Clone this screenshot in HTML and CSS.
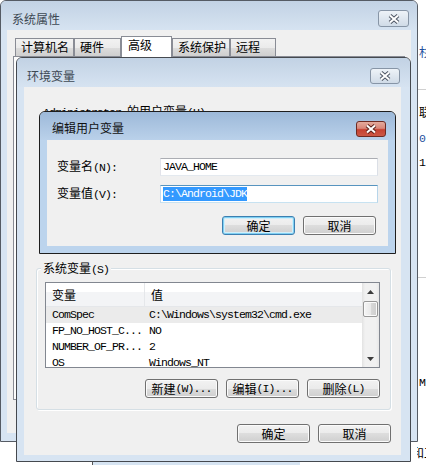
FILE: index.html
```html
<!DOCTYPE html>
<html lang="zh-CN">
<head>
<meta charset="utf-8">
<title>环境变量</title>
<link rel="stylesheet" href="styles.css">
</head>
<body>
<div class="desk">
  <div class="behind">
    <div class="frag blue f1">杉</div>
    <div class="hl h1"></div>
    <div class="frag f2">联</div>
    <div class="frag blue f3 m">0</div>
    <div class="frag f4 m">1</div>
    <div class="hl h2"></div>
    <div class="frag f5 m">M)</div>
    <div class="frag f6">和工</div>
  </div>
  <div class="strip"></div>

  <div class="win sys">
    <div class="titlebar">
      <span class="title">系统属性</span>
      <span class="close"><svg width="12" height="10" viewBox="0 0 12 10"><path d="M2 1.5L10 8.5M10 1.5L2 8.5" stroke="#4f5765" stroke-width="4"/><path d="M2 1.5L10 8.5M10 1.5L2 8.5" stroke="#fff" stroke-width="2"/></svg></span>
    </div>
    <div class="client">
      <div class="tabs">
        <div class="tab t1">计算机名</div>
        <div class="tab t2">硬件</div>
        <div class="tab sel t3">高级</div>
        <div class="tab t4">系统保护</div>
        <div class="tab t5">远程</div>
      </div>
      <div class="tabpanel"></div>
    </div>
  </div>

  <div class="win env">
    <div class="titlebar">
      <span class="title">环境变量</span>
      <span class="close"><svg width="12" height="10" viewBox="0 0 12 10"><path d="M2 1.5L10 8.5M10 1.5L2 8.5" stroke="#4f5765" stroke-width="4"/><path d="M2 1.5L10 8.5M10 1.5L2 8.5" stroke="#fff" stroke-width="2"/></svg></span>
    </div>
    <div class="client">
      <div class="ulabel"><span class="m">Administrator </span>的用户变量<span class="m">(U)</span></div>
      <div class="group">
        <div class="glabel">系统变量<span class="m">(S)</span></div>
        <div class="list">
          <div class="lmain">
            <div class="lhead"><span class="c1">变量</span><span class="c2">值</span></div>
            <div class="lrow sel"><span class="c1 m">ComSpec</span><span class="c2 m">C:\Windows\system32\cmd.exe</span></div>
            <div class="lrow"><span class="c1 m">FP_NO_HOST_C...</span><span class="c2 m">NO</span></div>
            <div class="lrow"><span class="c1 m">NUMBER_OF_PR...</span><span class="c2 m">2</span></div>
            <div class="lrow"><span class="c1 m">OS</span><span class="c2 m">Windows_NT</span></div>
          </div>
          <div class="vscroll">
            <div class="sarrow"><svg width="7" height="4" viewBox="0 0 7 4"><path d="M3.5 0L7 4H0Z" fill="#3c3c3c"/></svg></div>
            <div class="thumb"></div>
            <div class="sfill"></div>
            <div class="sarrow"><svg width="7" height="4" viewBox="0 0 7 4"><path d="M0 0H7L3.5 4Z" fill="#3c3c3c"/></svg></div>
          </div>
        </div>
        <div class="btnrow grp-btns">
          <button class="btn">新建<span class="m">(W)...</span></button>
          <button class="btn">编辑<span class="m">(I)...</span></button>
          <button class="btn">删除<span class="m">(L)</span></button>
        </div>
      </div>
      <div class="btnrow dlg-btns">
        <button class="btn">确定</button>
        <button class="btn">取消</button>
      </div>
    </div>
  </div>

  <div class="win edit">
    <div class="titlebar">
      <span class="title">编辑用户变量</span>
      <span class="close"><svg width="12" height="10" viewBox="0 0 12 10"><path d="M2 1.5L10 8.5M10 1.5L2 8.5" stroke="#5e231c" stroke-width="4"/><path d="M2 1.5L10 8.5M10 1.5L2 8.5" stroke="#fff" stroke-width="2"/></svg></span>
    </div>
    <div class="client">
      <div class="frow"><span class="flabel">变量名<span class="m">(N):</span></span><div class="input"><span class="m">JAVA_HOME</span></div></div>
      <div class="frow r2"><span class="flabel">变量值<span class="m">(V):</span></span><div class="input focus"><span class="m selt">C:\Android\JDK</span></div></div>
      <div class="btnrow edit-btns">
        <button class="btn def">确定</button>
        <button class="btn">取消</button>
      </div>
    </div>
  </div>
</div>
</body>
</html>
```

FILE: styles.css
```css
* { box-sizing: border-box; margin: 0; padding: 0; }
html, body { width: 426px; height: 465px; overflow: hidden; background: #fff; }
body {
  font-family: "Noto Sans CJK SC", "Noto Sans", sans-serif;
  font-size: 12px;
  line-height: 16px;
  color: #000;
}
.m {
  font-family: "Liberation Mono", "DejaVu Sans Mono", monospace;
  font-size: 11.5px;
  letter-spacing: -0.9px;
}
.desk { position: relative; width: 426px; height: 465px; overflow: hidden; }

/* background application peeking on the right */
.behind {
  position: absolute; left: 417px; top: 0; width: 9px; height: 465px;
  overflow: hidden; display: flex; flex-direction: column; padding-left: 2px;
}
.frag { height: 16px; line-height: 16px; white-space: nowrap; }
.blue { color: #1d4f9c; }
.hl { height: 1px; background: #d0d0d0; margin-left: -2px; }
.f1 { margin-top: 44px; }
.h1 { margin-top: 29px; }
.f2 { margin-top: 14px; }
.f3 { margin-top: 11px; }
.f4 { margin-top: 8px; }
.h2 { margin-top: 106px; }
.f5 { margin-top: 97px; }
.f6 { margin-top: 54px; margin-left: -7px; }
.strip {
  position: absolute; left: 92px; top: 462px; width: 208px; height: 3px;
  background: #d6e4f2; border-left: 1px solid #555;
}

/* windows */
.win {
  position: absolute; display: flex; flex-direction: column;
  border: 1px solid #555b64; border-radius: 6px 6px 0 0;
  background: #d7e4f2; overflow: hidden;
}
.sys { left: 0; top: 0; width: 418px; height: 442px; }
.env { left: 16px; top: 57px; width: 395px; height: 405px; border-color: #45494f; }
.edit { left: 39px; top: 111px; width: 357px; height: 143px; border-color: #1e1e1e; background: #bcd4ed; }

.titlebar {
  display: flex; align-items: flex-start; justify-content: space-between; flex: none;
  background: linear-gradient(#c2d2e4, #d6e3f1);
}
.sys .titlebar { height: 29px; padding-left: 11px; }
.env .titlebar { height: 29px; padding-left: 10px; }
.edit .titlebar { height: 28px; padding-left: 12px; background: linear-gradient(#9db9d9, #bad1ea); }
.title { line-height: 16px; color: #3d4853; }
.sys .title, .env .title { margin-top: 10px; }
.edit .title { margin-top: 8px; color: #111; }

.close {
  display: flex; align-items: center; justify-content: center;
  width: 30px; height: 16px;
  border: 1px solid #8795a6; border-radius: 3px;
  background: linear-gradient(#eef3f8, #d0dbe7);
}
.sys .close { width: 31px; height: 17px; margin: 9px 8px 0 0; }
.env .close { margin: 10px 10px 0 0; }
.edit .close {
  margin: 9px 9px 0 0; border-color: #6e2a22;
  background: linear-gradient(#e3aa9c 0, #d9877a 45%, #c64131 55%, #cc5846 100%);
}

.client { flex: 1; background: #f0f0f0; display: flex; flex-direction: column; min-height: 0; }
.sys .client { margin: 0 6px 8px 6px; padding: 6px 0 33px 6px; }
.env .client { margin: 0 9px 6px 7px; padding: 16px 10px 0 12px; }
.edit .client { margin: 0 7px 7px 7px; padding: 18px 10px 0 10px; }

/* tabs */
.tabs {
  display: flex; align-items: flex-start; height: 21px;
  margin: 0 0 -1px 2px; position: relative; z-index: 1;
}
.tab {
  height: 18px; margin-top: 2px; padding-left: 5px;
  border: 1px solid #898c95; border-bottom: 0;
  background: linear-gradient(#f2f2f2, #ebebeb 50%, #dddddd 50%, #cfcfcf);
  line-height: 16px; white-space: nowrap;
}
.tab.sel { height: 21px; margin-top: 0; background: #fff; padding-left: 6px; }
.t1 { width: 59px; }
.t2 { width: 47px; }
.t3 { width: 51px; }
.t4 { width: 58px; }
.t5 { width: 46px; }
.tabpanel { flex: 1; border: 1px solid #898c95; background: #fcfcfc; margin-right: 6px; }

/* env dialog */
.ulabel { height: 16px; line-height: 16px; margin-left: 7px; white-space: nowrap; }
.group {
  margin-top: 149px; height: 142px;
  border: 1px solid #d5dfe5; border-radius: 3px;
  box-shadow: inset 1px 1px 0 #fff, 1px 1px 0 #fff;
  display: flex; flex-direction: column;
}
.glabel {
  align-self: flex-start; margin: -9px 0 0 4px; padding: 0 2px;
  background: #f0f0f0; height: 16px; line-height: 16px; white-space: nowrap;
}
.list {
  display: flex; margin: 6px 0 0 8px; width: 335px; height: 86px;
  border: 1px solid #828790; background: #fff; overflow: hidden;
}
.lmain { flex: 1; min-width: 0; overflow: hidden; }
.lhead {
  display: flex; height: 24px; border-bottom: 1px solid #e5e7ea;
  background: linear-gradient(#fff 0, #fff 9px, #f3f4f6 9px, #f3f4f6 100%);
}
.lhead .c1 { width: 99px; border-right: 1px solid #e5e7ea; padding: 4px 0 0 6px; }
.lhead .c2 { padding: 4px 0 0 6px; }
.lrow { display: flex; height: 16px; line-height: 16px; white-space: nowrap; }
.lrow .c1 { width: 99px; padding-left: 6px; flex: none; }
.lrow .c2 { padding-left: 4px; }
.lrow.sel { background: #ebebeb; }
.vscroll {
  width: 17px; flex: none; display: flex; flex-direction: column; align-items: center;
  background: linear-gradient(90deg, #e2e2e2, #f1f1f1 18%, #f1f1f1 82%, #e7e7e7);
}
.sarrow { width: 17px; height: 17px; display: flex; align-items: center; justify-content: center; flex: none; }
.thumb {
  width: 15px; height: 16px; margin-top: 1px; flex: none;
  border: 1px solid #979797; border-radius: 2px;
  background: linear-gradient(90deg, #f5f5f5, #e9e9e9 50%, #d9d9d9 50%, #cdcdcd);
  box-shadow: inset 0 0 0 1px #fafafa;
}
.sfill { flex: 1; }

.btnrow { display: flex; justify-content: flex-end; gap: 8px; }
.grp-btns { margin: 11px 10px 0 0; }
.dlg-btns { margin-top: 14px; }
.btn {
  width: 73px; height: 19px;
  border: 1px solid #707070; border-radius: 3px;
  background: linear-gradient(#f2f2f2, #ebebeb 50%, #dddddd 50%, #cfcfcf);
  box-shadow: inset 0 0 0 1px #fbfbfb;
  font-family: "Noto Sans CJK SC", sans-serif; font-size: 12px; line-height: 16px; color: #000;
  display: flex; align-items: center; justify-content: center; white-space: nowrap;
}
.btn.def { border-color: #3c7fb1; box-shadow: inset 0 0 0 1px #7fd0f2, inset 0 0 0 2px #d2eefa; }

/* edit dialog */
.frow { display: flex; align-items: center; height: 18px; }
.r2 { margin-top: 9px; }
.flabel { width: 103px; flex: none; white-space: nowrap; }
.input {
  width: 218px; height: 18px; padding: 0 2px;
  border: 1px solid; border-color: #abadb3 #dbdfe6 #e3e9ef #e2e3ea;
  background: #fff; display: flex; align-items: center; line-height: 16px; white-space: nowrap;
}
.input.focus { border-color: #5794bf #b7d5ea #c7e2f1 #c5daed; }
.selt { background: #3399ff; color: #fff; line-height: 14px; display: inline-block; }
.edit-btns { margin: 13px 2px 0 0; }
```
